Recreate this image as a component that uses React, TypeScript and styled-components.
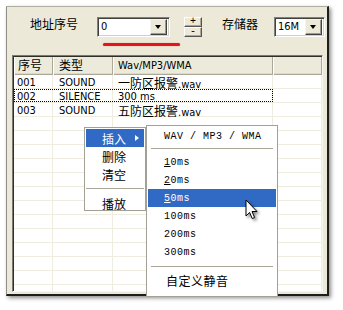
import React from 'react';
import styled, { createGlobalStyle } from 'styled-components';

const GlobalStyle = createGlobalStyle`
  html, body {
    margin: 0;
    padding: 0;
    background: #fff;
  }
  body {
    width: 343px;
    height: 310px;
    overflow: hidden;
  }
`;

const UI_FONT = `'DejaVu Sans Condensed', 'Liberation Sans', 'Noto Sans CJK SC', sans-serif`;
const CJK_FONT = `'Noto Sans CJK SC', sans-serif`;
const MONO_FONT = `'Liberation Mono', 'DejaVu Sans Mono', monospace`;

const Stage = styled.div`
  position: relative;
  width: 343px;
  height: 310px;
  padding: 6px 0 0 6px;
  box-sizing: border-box;
  font-family: ${UI_FONT};
  color: #000;
`;

const Frame = styled.div`
  width: 323px;
  height: 290px;
  box-sizing: border-box;
  background: #ece9d8;
  border-top: 1px solid #aeada4;
  border-left: 1px solid #8f8e88;
  border-right: 2px solid #1d1d1b;
  border-bottom: 2px solid #1d1d1b;
  box-shadow: 2px 2px 4px rgba(0, 0, 0, 0.45);
  display: flex;
  flex-direction: column;
`;

/* ---------- top toolbar ---------- */

const Toolbar = styled.div`
  height: 48px;
  flex: none;
  display: flex;
  align-items: flex-start;
  padding: 10px 0 0 23px;
  box-sizing: border-box;
`;

const Label = styled.span<{ $gap: number }>`
  font-family: ${CJK_FONT};
  font-size: 12px;
  line-height: 14px;
  margin-right: ${(p) => p.$gap}px;
  white-space: nowrap;
`;

const ComboWrap = styled.div<{ $w: number; $gap: number }>`
  position: relative;
  width: ${(p) => p.$w}px;
  margin-right: ${(p) => p.$gap}px;
  flex: none;
`;

const ComboField = styled.div`
  height: 20px;
  box-sizing: border-box;
  background: #fff;
  border-top: 1px solid #808080;
  border-left: 1px solid #808080;
  border-right: 1px solid #fff;
  border-bottom: 1px solid #fff;
  box-shadow: inset 1px 1px 0 #404040, inset -1px -1px 0 #d4d0c8;
  display: flex;
  align-items: center;
  padding: 0 2px 0 3px;
`;

const ComboText = styled.span`
  flex: 1;
  font-size: 11px;
  line-height: 14px;
`;

const DropButton = styled.div`
  width: 17px;
  height: 16px;
  box-sizing: border-box;
  background: #ece9d8;
  border-top: 1px solid #f4f3ee;
  border-left: 1px solid #f4f3ee;
  border-right: 1px solid #404040;
  border-bottom: 1px solid #404040;
  box-shadow: inset -1px -1px 0 #9d9a8c;
  display: flex;
  align-items: center;
  justify-content: center;

  &::after {
    content: '';
    width: 0;
    height: 0;
    border-left: 3.5px solid transparent;
    border-right: 3.5px solid transparent;
    border-top: 4px solid #000;
    margin: 0 1px 1px 0;
  }
`;

const RedMark = styled.div`
  position: absolute;
  left: 6px;
  top: 26px;
  width: 77px;
  height: 3px;
  border-radius: 2px;
  background: #e6141b;
  box-shadow: 0 0 1px rgba(230, 20, 27, 0.6);
`;

const Spinner = styled.div`
  width: 18px;
  height: 19px;
  margin-right: 20px;
  display: flex;
  flex-direction: column;
  flex: none;
`;

const SpinButton = styled.div`
  flex: 1;
  box-sizing: border-box;
  background: #ece9d8;
  border-top: 1px solid #fff;
  border-left: 1px solid #fff;
  border-right: 1px solid #555;
  border-bottom: 1px solid #555;
  box-shadow: inset -1px -1px 0 #aca899;
  display: flex;
  align-items: center;
  justify-content: center;
  font-family: ${MONO_FONT};
  font-size: 10px;
  line-height: 8px;
`;

/* ---------- list view ---------- */

const ListBox = styled.div`
  flex: 1;
  margin: 0 4px 2px 5px;
  background: #fff;
  border-top: 1px solid #7a7a72;
  border-left: 1px solid #7a7a72;
  border-right: 1px solid #f6f5f0;
  border-bottom: 1px solid #f6f5f0;
  box-shadow: inset 1px 1px 0 #2e2e2a;
  padding: 1px 0 0 1px;
  overflow: hidden;
`;

const HeaderRow = styled.div`
  display: flex;
  height: 18px;
  background: #ebeadb;
  box-shadow: inset 0 -1px 0 #aca899, inset 0 -2px 0 #dcdac9;
`;

const HeaderCell = styled.div<{ $w?: number; $pad: number }>`
  ${(p) => (p.$w ? `width: ${p.$w}px; flex: none;` : 'flex: 1;')}
  box-sizing: border-box;
  padding: 1px 0 0 ${(p) => p.$pad}px;
  border-right: 1px solid #aca899;
  box-shadow: inset 1px 0 0 #fff;
  font-size: 11px;
  line-height: 16px;
  white-space: nowrap;
`;

const Row = styled.div`
  display: flex;
  height: 14px;
  box-sizing: border-box;
  border-bottom: 1px solid #efeddf;
`;

const MainGroup = styled.div<{ $focused?: boolean }>`
  display: flex;
  flex: none;
  width: 259px;
  outline: ${(p) => (p.$focused ? '1px dotted #000' : 'none')};
  outline-offset: -1px;
`;

const Cell = styled.div<{ $w?: number; $pad: number }>`
  ${(p) => (p.$w ? `width: ${p.$w}px; flex: none;` : 'flex: 1;')}
  box-sizing: border-box;
  padding: 1px 0 0 ${(p) => p.$pad}px;
  border-right: 1px solid #efeddf;
  font-size: 11px;
  line-height: 13px;
  white-space: nowrap;
`;

const Cjk = styled.span`
  font-family: ${CJK_FONT};
  font-size: 12px;
  line-height: 13px;
`;

/* ---------- popup menus ---------- */

const Menu = styled.div<{ $x: number; $y: number; $w: number; $h: number }>`
  position: absolute;
  left: ${(p) => p.$x}px;
  top: ${(p) => p.$y}px;
  width: ${(p) => p.$w}px;
  height: ${(p) => p.$h}px;
  box-sizing: border-box;
  background: #fff;
  border: 1px solid #a3a196;
  padding: 1px 1px 0;
  display: flex;
  flex-direction: column;
`;

const MenuItem = styled.div<{ $active?: boolean; $mono?: boolean; $pad: number }>`
  height: 18px;
  flex: none;
  display: flex;
  align-items: center;
  justify-content: space-between;
  padding: 0 5px 0 ${(p) => p.$pad}px;
  background: ${(p) => (p.$active ? '#316ac5' : 'transparent')};
  color: ${(p) => (p.$active ? '#fff' : '#000')};
  font-family: ${(p) => (p.$mono ? MONO_FONT : CJK_FONT)};
  font-size: ${(p) => (p.$mono ? '10px' : '12px')};
  white-space: nowrap;

  u {
    text-underline-offset: 1px;
  }
`;

const SubArrow = styled.span<{ $active?: boolean }>`
  width: 0;
  height: 0;
  border-top: 3.5px solid transparent;
  border-bottom: 3.5px solid transparent;
  border-left: 4px solid ${(p) => (p.$active ? '#fff' : '#000')};
`;

const Separator = styled.div<{ $inset: number; $top: number; $bottom: number }>`
  height: 1px;
  flex: none;
  margin: ${(p) => `${p.$top}px ${p.$inset}px ${p.$bottom}px`};
  background: #aca899;
`;

const WideText = styled.span`
  letter-spacing: 0.5px;
`;

const Pointer = styled.svg`
  position: absolute;
  left: 245px;
  top: 199px;
  filter: drop-shadow(2px 2px 1.5px rgba(0, 0, 0, 0.45));
`;

const rows = [
  { no: '001', type: 'SOUND', name: '一防区报警', ext: '.wav' },
  { no: '002', type: 'SILENCE', name: '', ext: '300 ms', focused: true },
  { no: '003', type: 'SOUND', name: '五防区报警', ext: '.wav' },
];

const EMPTY_ROWS = 14;

const App = () => {
  return (
    <>
      <GlobalStyle />
      <Stage>
        <Frame>
          <Toolbar>
            <Label $gap={19}>地址序号</Label>
            <ComboWrap $w={73} $gap={14}>
              <ComboField>
                <ComboText>0</ComboText>
                <DropButton />
              </ComboField>
              <RedMark />
            </ComboWrap>
            <Spinner>
              <SpinButton>+</SpinButton>
              <SpinButton>-</SpinButton>
            </Spinner>
            <Label $gap={16}>存储器</Label>
            <ComboWrap $w={51} $gap={0}>
              <ComboField>
                <ComboText>16M</ComboText>
                <DropButton />
              </ComboField>
            </ComboWrap>
          </Toolbar>

          <ListBox>
            <HeaderRow>
              <HeaderCell $w={39} $pad={4}>
                <Cjk>序号</Cjk>
              </HeaderCell>
              <HeaderCell $w={60} $pad={6}>
                <Cjk>类型</Cjk>
              </HeaderCell>
              <HeaderCell $w={160} $pad={5}>
                Wav/MP3/WMA
              </HeaderCell>
              <HeaderCell $pad={4} />
            </HeaderRow>
            {rows.map((r) => (
              <Row key={r.no}>
                <MainGroup $focused={r.focused}>
                  <Cell $w={39} $pad={3}>
                    {r.no}
                  </Cell>
                  <Cell $w={60} $pad={6}>
                    {r.type}
                  </Cell>
                  <Cell $w={160} $pad={5}>
                    {r.name && <Cjk>{r.name}</Cjk>}
                    {r.ext}
                  </Cell>
                </MainGroup>
                <Cell $pad={4} />
              </Row>
            ))}
            {Array.from({ length: EMPTY_ROWS }).map((_, i) => (
              <Row key={`empty-${i}`}>
                <MainGroup>
                  <Cell $w={39} $pad={3} />
                  <Cell $w={60} $pad={6} />
                  <Cell $w={160} $pad={5} />
                </MainGroup>
                <Cell $pad={4} />
              </Row>
            ))}
          </ListBox>
        </Frame>

        {/* context menu */}
        <Menu $x={84} $y={127} $w={62} $h={84}>
          <MenuItem $active $pad={16}>
            <span>插入</span>
            <SubArrow $active />
          </MenuItem>
          <MenuItem $pad={16}>删除</MenuItem>
          <MenuItem $pad={16}>清空</MenuItem>
          <Separator $inset={0} $top={5} $bottom={5} />
          <MenuItem $pad={16}>播放</MenuItem>
        </Menu>

        {/* insert submenu */}
        <Menu $x={146} $y={125} $w={132} $h={172}>
          <MenuItem $mono $pad={16}>
            <WideText>WAV / MP3 / WMA</WideText>
          </MenuItem>
          <Separator $inset={3} $top={3} $bottom={4} />
          <MenuItem $mono $pad={16}>
            <WideText>
              <u>1</u>0ms
            </WideText>
          </MenuItem>
          <MenuItem $mono $pad={16}>
            <WideText>
              <u>2</u>0ms
            </WideText>
          </MenuItem>
          <MenuItem $mono $active $pad={16}>
            <WideText>
              <u>5</u>0ms
            </WideText>
          </MenuItem>
          <MenuItem $mono $pad={16}>
            <WideText>100ms</WideText>
          </MenuItem>
          <MenuItem $mono $pad={16}>
            <WideText>200ms</WideText>
          </MenuItem>
          <MenuItem $mono $pad={16}>
            <WideText>300ms</WideText>
          </MenuItem>
          <Separator $inset={3} $top={5} $bottom={4} />
          <MenuItem $pad={18}>
            <WideText>自定义静音</WideText>
          </MenuItem>
        </Menu>

        <Pointer width="14" height="22" viewBox="0 0 14 22">
          <path
            d="M1 1 L1 17 L4.6 13.4 L7.2 19.5 L9.6 18.5 L7 12.5 L12 12.5 Z"
            fill="#fff"
            stroke="#000"
            strokeWidth="1"
            strokeLinejoin="miter"
          />
        </Pointer>
      </Stage>
    </>
  );
};

export default App;
